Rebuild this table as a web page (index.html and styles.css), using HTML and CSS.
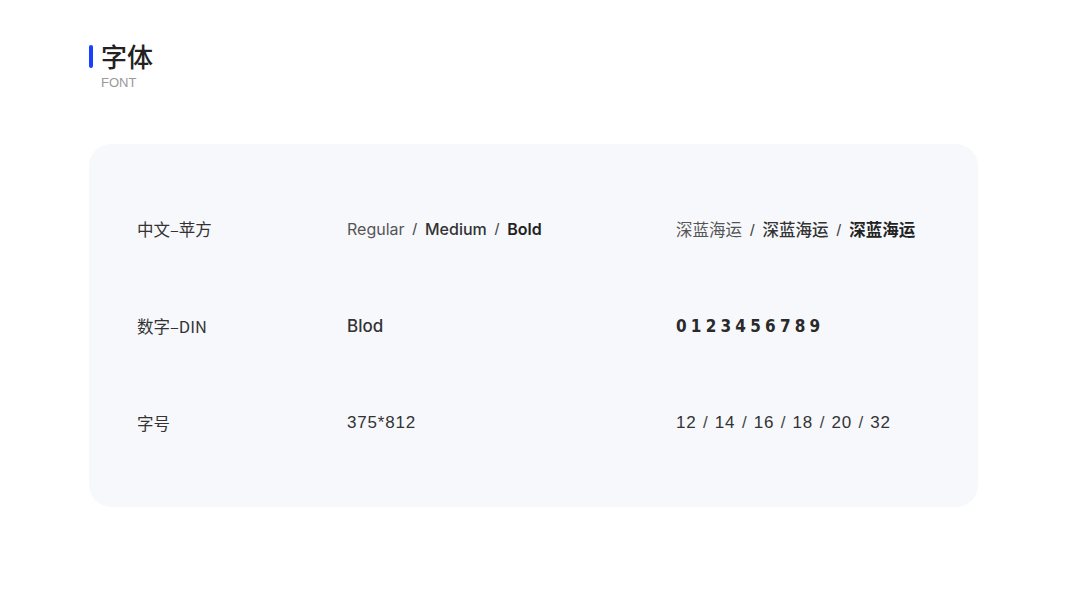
FILE: index.html
```html
<!DOCTYPE html>
<html lang="zh">
<head>
<meta charset="utf-8">
<link rel="stylesheet" href="styles.css">
</head>
<body>
<div class="page">
  <header class="head">
    <div class="title-row"><span class="bar"></span><h1 class="title">字体</h1></div>
    <div class="sub">FONT</div>
  </header>
  <section class="card">
    <div class="row">
      <div class="c1">中文–苹方</div>
      <div class="c2"><span class="w4">Regular</span><span class="sep">/</span><span class="w5">Medium</span><span class="sep">/</span><span class="w7">Bold</span></div>
      <div class="c3 cn"><span class="w4 light">深蓝海运</span><span class="sep">/</span><span class="w5">深蓝海运</span><span class="sep">/</span><span class="w7">深蓝海运</span></div>
    </div>
    <div class="row">
      <div class="c1">数字–DIN</div>
      <div class="c2 blod">Blod</div>
      <div class="c3 din">0123456789</div>
    </div>
    <div class="row">
      <div class="c1">字号</div>
      <div class="c2 num">375*812</div>
      <div class="c3 num sizes">12<span class="sep">/</span>14<span class="sep">/</span>16<span class="sep">/</span>18<span class="sep">/</span>20<span class="sep">/</span>32</div>
    </div>
  </section>
</div>
</body>
</html>
```
FILE: styles.css
```css
html, body { margin: 0; padding: 0; background: #fff; }
body { font-family: "Noto Sans", "Liberation Sans", "Noto Sans CJK SC", sans-serif; color: #333; }
.page { width: 1067px; height: 600px; box-sizing: border-box; padding: 40px 89px 0; }
.head { height: 104px; }
.title-row { display: flex; align-items: center; gap: 8px; height: 32px; }
.bar { width: 4px; height: 23px; background: #1a3fff; border-radius: 2px; }
.title { margin: 0; font-family: "Noto Sans CJK SC", sans-serif; font-size: 26px; font-weight: 500; color: #222; line-height: 32px; }
.sub { margin: 3px 0 0 12px; font-family: "Liberation Sans", sans-serif; font-size: 13px; color: #999; line-height: 16px; }
.card { width: 889px; height: 363px; box-sizing: border-box; background: #f7f8fc; border-radius: 22px; padding: 73px 48px 0; display: flex; flex-direction: column; gap: 73px; }
.row { display: grid; grid-template-columns: 210px 329px 1fr; height: 24px; line-height: 24px; font-size: 16px; }
.c1 { font-family: "Noto Sans CJK SC", sans-serif; font-size: 16.5px; color: #333; }
.c2, .c3 { font-family: "Inter", "Noto Sans CJK SC", sans-serif; color: #333; }
.w4 { font-weight: 400; color: #555; }
.w5 { font-weight: 500; color: #333; }
.w7 { font-weight: 600; color: #222; }
.c2 { font-size: 16px; }
.sep { margin: 0 8px; color: #444; font-family: "Liberation Sans", sans-serif; font-weight: 400; }
.cn { font-family: "Noto Sans CJK SC", sans-serif; font-size: 16.5px; }
.cn .sep { margin: 0 8px; }
.cn .w7 { font-weight: 700; }
.blod { font-weight: 500; font-size: 17px; }
.num { font-family: "Liberation Sans", sans-serif; font-size: 17px; letter-spacing: 0.8px; color: #333; }
.sizes .sep { margin: 0 7px 0 6.6px; letter-spacing: 0; }
.din { font-family: "DejaVu Sans Condensed", "DejaVu Sans", sans-serif; font-weight: 700; letter-spacing: 4.2px; color: #2a2a2a; font-size: 17px; }
```
